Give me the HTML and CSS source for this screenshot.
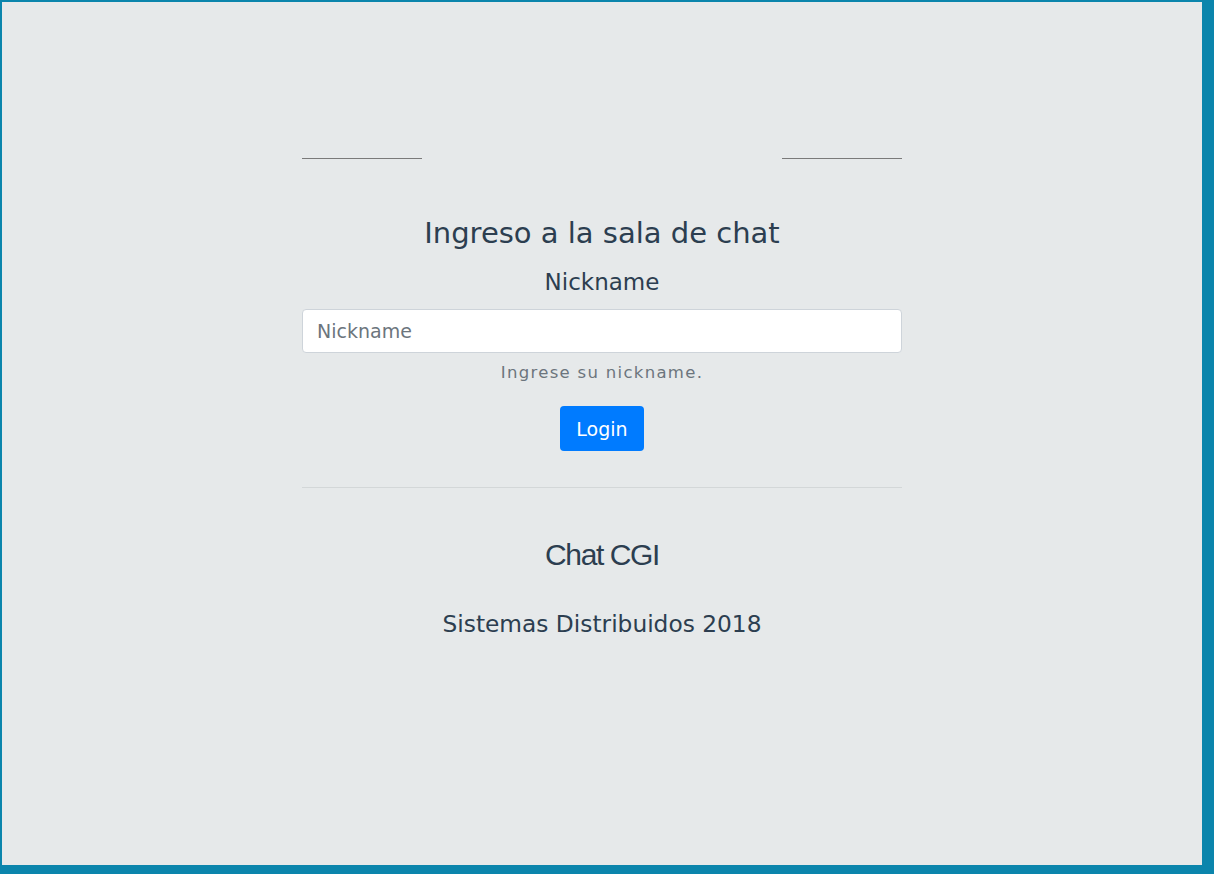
FILE: index.html
```html
<!DOCTYPE html>
<html lang="es">
<head>
<meta charset="utf-8">
<title>Chat CGI</title>
<link rel="stylesheet" href="styles.css">
</head>
<body>
<div class="page">
  <main class="container">
    <div class="top-rules">
      <hr class="short-rule">
      <hr class="short-rule">
    </div>
    <h2 class="title">Ingreso a la sala de chat</h2>
    <form class="login-form">
      <label class="label" for="nick">Nickname</label>
      <input class="input" id="nick" type="text" placeholder="Nickname">
      <small class="help">Ingrese su nickname.</small>
      <button class="btn" type="button">Login</button>
    </form>
    <hr class="divider">
    <h1 class="brand">Chat CGI</h1>
    <p class="footer">Sistemas Distribuidos 2018</p>
  </main>
</div>
</body>
</html>
```
FILE: styles.css
```css
html, body {
  margin: 0;
  padding: 0;
}
html {
  background: #0b85ac;
}
body {
  font-family: "DejaVu Sans", sans-serif;
  color: #2c3e50;
}
.page {
  margin: 2px 0 0 2px;
  width: 1200px;
  height: 863px;
  background: #e6e9ea;
}
.container {
  width: 600px;
  margin: 0 auto;
  padding-top: 156px;
  display: flex;
  flex-direction: column;
  align-items: center;
}
.top-rules {
  width: 100%;
  display: flex;
  justify-content: space-between;
}
.short-rule {
  width: 120px;
  margin: 0;
  border: 0;
  border-top: 1px solid #7a7a7a;
}
.title {
  font-weight: normal;
  font-size: 29px;
  margin: 54px 0 0;
  line-height: 40px;
}
.login-form {
  width: 100%;
  display: flex;
  flex-direction: column;
  align-items: center;
}
.label {
  font-size: 23px;
  line-height: 30px;
  margin-top: 14px;
}
.input {
  box-sizing: border-box;
  width: 100%;
  height: 44px;
  margin-top: 12px;
  padding: 0 14px;
  border: 1px solid #ced4da;
  border-radius: 4px;
  background: #fff;
  font-family: "DejaVu Sans", sans-serif;
  font-size: 19px;
  color: #495057;
}
.input::placeholder {
  color: #6c757d;
}
.help {
  font-size: 16.5px;
  color: #6c757d;
  letter-spacing: 1.3px;
  line-height: 24px;
  margin-top: 8px;
}
.btn {
  margin-top: 21px;
  width: 84px;
  height: 45px;
  padding: 0;
  border: 0;
  border-radius: 4px;
  background: #007bff;
  color: #fff;
  font-family: "DejaVu Sans", sans-serif;
  font-size: 19px;
}
.divider {
  width: 100%;
  margin: 36px 0 0;
  border: 0;
  border-top: 1px solid #d3d7d8;
}
.brand {
  font-family: "Liberation Sans", Arial, sans-serif;
  font-weight: normal;
  font-size: 30px;
  letter-spacing: -1.4px;
  margin: 49px 0 0;
  line-height: 36px;
}
.footer {
  font-size: 23.3px;
  margin: 36px 0 0;
  line-height: 30px;
}
```
